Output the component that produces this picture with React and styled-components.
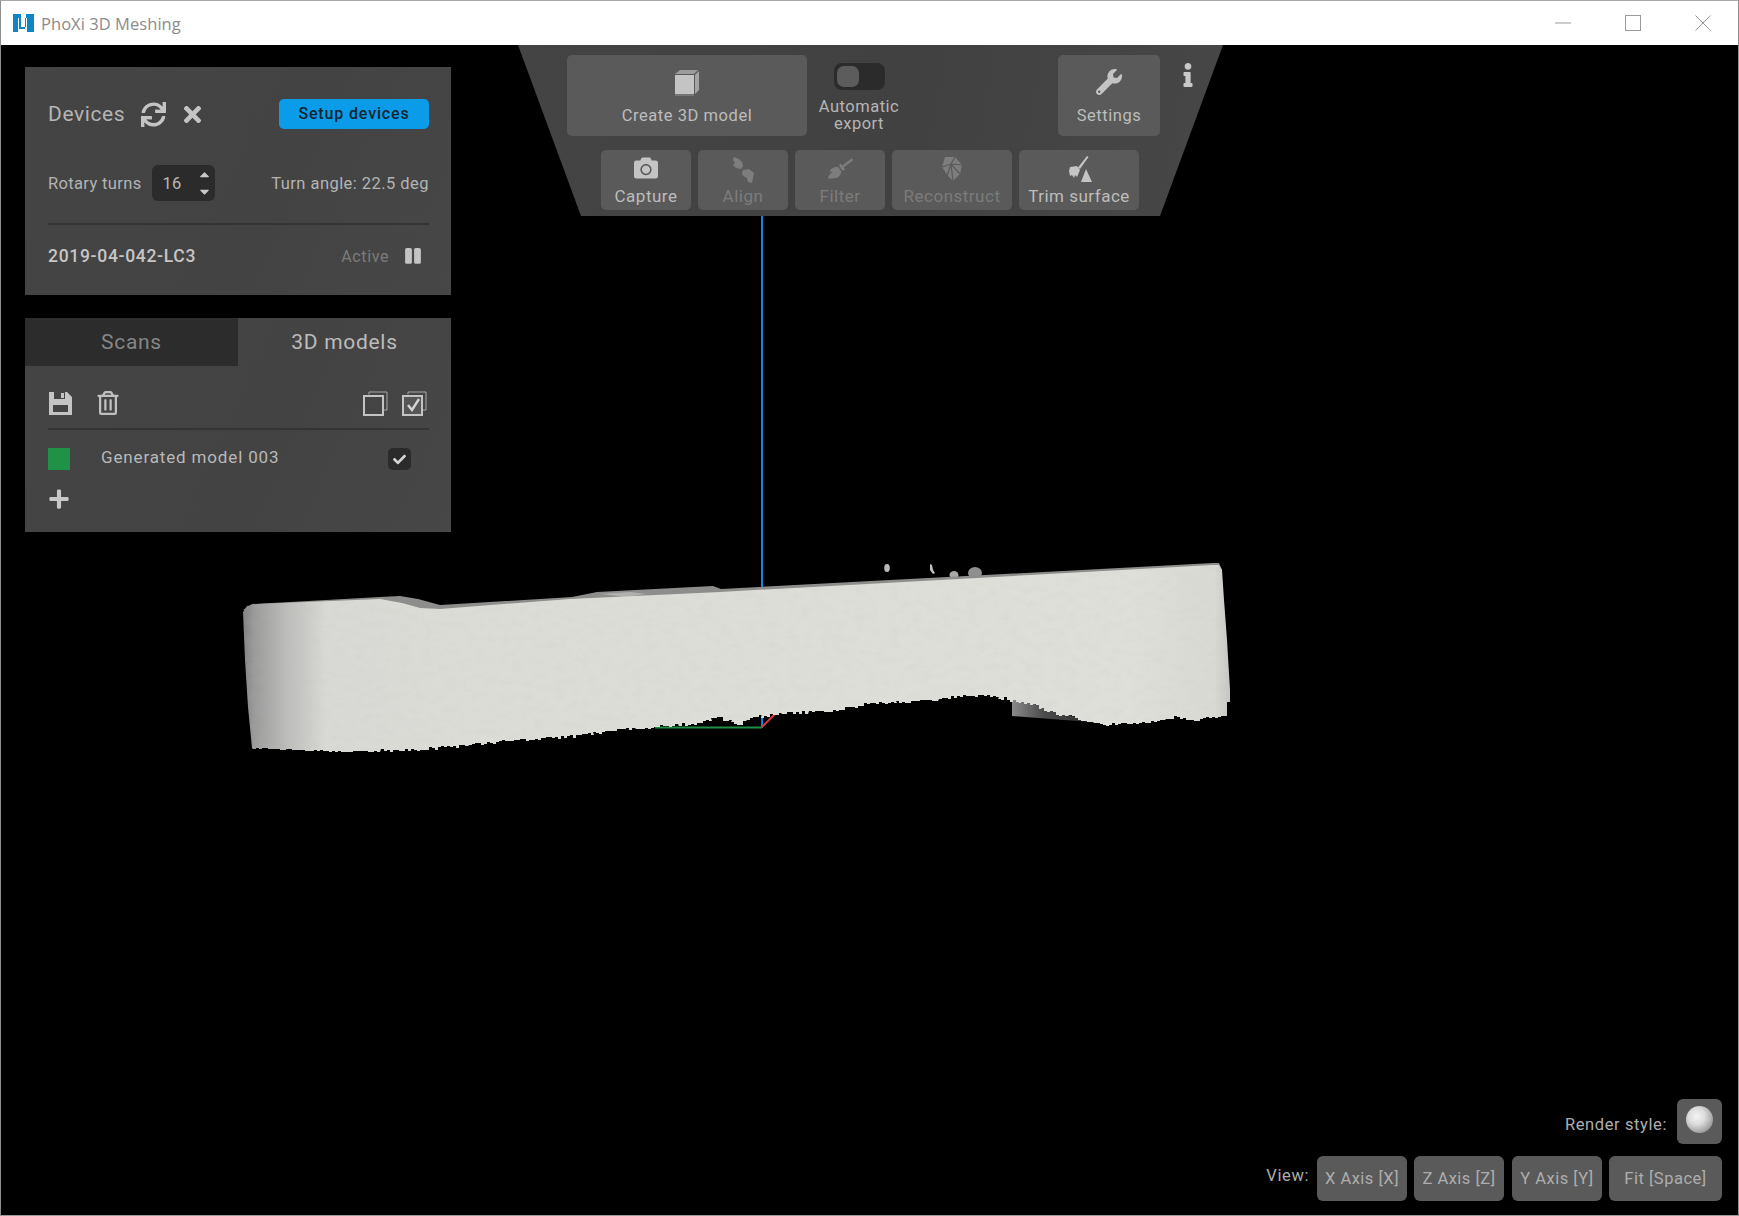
import React from "react";
import styled, { createGlobalStyle } from "styled-components";
import {
  FaSync, FaTimes, FaWrench, FaCamera, FaInfo, FaRegTrashAlt, FaPause, FaPlus, FaBroom, FaCheck, FaCaretUp, FaCaretDown,
} from "react-icons/fa";

const Global = createGlobalStyle`
  html, body { margin: 0; padding: 0; background: #000; }
  body { font-family: Roboto, "Liberation Sans", sans-serif; }
  * { box-sizing: border-box; }
`;

const Window = styled.div`
  width: 1739px; height: 1216px; display: flex; flex-direction: column; overflow: hidden;
  border: 1px solid #8c8c8c; border-bottom-color: #9a9a9a; border-top-color: #a8a8a8; background: #000;
`;
const TitleBar = styled.header`
  height: 44px; flex: none; background: #fff; display: flex; align-items: center; padding-left: 12px;
`;
const AppTitle = styled.span`
  font-family: "Open Sans", sans-serif; font-size: 16.5px; color: #8b8b8b; margin-left: 6px; letter-spacing: 0.05px;
`;
const WinControls = styled.div`
  margin-left: auto; display: flex; height: 100%; align-items: center; color: #8f8f8f;
`;
const WinBtn = styled.div`
  width: 70px; height: 100%; display: flex; align-items: center; justify-content: center;
`;
const Viewport = styled.main`
  flex: 1; position: relative; background: #000; overflow: hidden;
`;
const Scene = styled.svg`
  position: absolute; inset: 0; width: 100%; height: 100%; display: block;
`;
const SideColumn = styled.div`
  position: absolute; left: 24px; top: 22px; width: 426px; display: flex; flex-direction: column; gap: 23px;
`;
const Panel = styled.section`
  background: linear-gradient(115deg, #444 0%, #434343 60%, #474747 100%);
  height: ${p => p.$h}px; color: #bdbdbd;
`;
const DevicesPanel = styled(Panel)`
  padding: 32px 22px 0 23px; display: flex; flex-direction: column;
`;
const HeadRow = styled.div`
  display: flex; align-items: center; height: 30px;
`;
const DevicesTitle = styled.span`
  font-size: 21px; color: #b5b5b5; letter-spacing: 0.6px; width: 93px;
`;
const HeadIcon = styled.span`
  display: flex; color: #c4c4c4; font-size: ${p => p.$size}px; margin-right: ${p => p.$mr || 0}px;
`;
const SetupButton = styled.button`
  margin-left: auto; width: 150px; height: 30px; border: 0; border-radius: 5px; background: #0a9be9; color: #10242e;
  font: 500 16px Roboto, sans-serif; letter-spacing: 0.85px; padding: 0 0 2px;
`;
const RotaryRow = styled.div`
  display: flex; align-items: center; margin-top: 36px; height: 36px; font-size: 16.5px; letter-spacing: 0.35px; color: #b4b4b4;
`;
const SpinBox = styled.div`
  width: 63px; height: 36px; margin-left: 10px; background: #2b2b2b; border-radius: 6px; display: flex; align-items: center;
  padding-left: 11px; color: #b9b9b9; position: relative;
`;
const SpinArrows = styled.span`
  margin-left: auto; margin-right: 3px; display: flex; flex-direction: column; color: #c8c8c8; font-size: 15px; line-height: 0; gap: 2px;
`;
const TurnAngle = styled.span`
  margin-left: auto; letter-spacing: 0.45px;
`;
const Divider = styled.hr`
  border: 0; height: 2px; background: #343434; margin: ${p => p.$m};
`;
const DeviceRow = styled.div`
  display: flex; align-items: center; margin-top: 20px; height: 22px;
`;
const DeviceName = styled.span`
  font-size: 17.5px; font-weight: 500; color: #c6c6c6; letter-spacing: 0.7px;
`;
const ActiveLabel = styled.span`
  margin-left: auto; font-size: 16px; color: #7c7c7c; letter-spacing: 0.6px; margin-right: 15px;
`;
const PauseIcon = styled.span`
  display: flex; color: #c4c4c4; font-size: 18px; margin-right: 7px;
`;
const Tabs = styled.div`
  display: grid; grid-template-columns: 213px 1fr; height: 48px;
`;
const Tab = styled.div`
  display: flex; align-items: center; justify-content: center; font-size: 21px; letter-spacing: 0.7px;
  background: ${p => (p.$active ? "transparent" : "#2c2c2c")}; color: ${p => (p.$active ? "#bcbcbc" : "#868686")};
`;
const TabBody = styled.div`
  padding: 24px 22px 0 23px;
`;
const IconRow = styled.div`
  display: flex; align-items: center; height: 26px; gap: 23px;
`;
const RightIcons = styled.div`
  margin-left: auto; display: flex; gap: 14px; margin-right: 2px;
`;
const ModelRow = styled.div`
  display: flex; align-items: center; height: 22px;
`;
const Swatch = styled.div`
  width: 22px; height: 22px; background: ${p => p.$c};
`;
const ModelName = styled.span`
  margin-left: 31px; margin-top: -5px; font-size: 17px; color: #b9b9b9; letter-spacing: 0.85px;
`;
const CheckBox = styled.div`
  margin-left: auto; margin-right: 18px; width: 23px; height: 22px; border-radius: 5px; background: #2b2b2b; color: #d6d6d6;
  display: flex; align-items: center; justify-content: center; font-size: 13px;
`;
const AddRow = styled.div`
  margin-top: 18px; color: #c8c8c8; font-size: 22px; display: flex;
`;
const Toolbar = styled.nav`
  position: absolute; left: 517px; top: 0; width: 705px; height: 171px; background: linear-gradient(100deg, #444 0%, #414141 55%, #474747 100%);
  clip-path: polygon(0 0, 100% 0, 642px 100%, 63px 100%);
  display: flex; flex-direction: column; padding-top: 10px;
`;
const TopRow = styled.div`
  display: flex; height: 81px; padding-left: 49px;
`;
const ToolButton = styled.button`
  border: 0; border-radius: 5px; background: #5a5a5a; padding: 0; height: 100%; width: ${p => p.$w}px; flex: none;
  display: flex; flex-direction: column; align-items: center; justify-content: space-between;
  font-family: Roboto, sans-serif; color: ${p => (p.$off ? "#7c7c7c" : "#bdbdbd")};
`;
const BigButton = styled(ToolButton)`
  font-size: 16.5px; letter-spacing: 0.55px; padding: 14px 0 11px;
`;
const SmallButton = styled(ToolButton)`
  font-size: 17px; letter-spacing: 0.5px; padding: 6px 0 4px;
`;
const ToggleGroup = styled.div`
  width: 104px; display: flex; flex-direction: column; align-items: center; padding-top: 8px; color: #b5b5b5;
  font-size: 16.5px; line-height: 17px; letter-spacing: 0.5px; text-align: center;
`;
const Toggle = styled.div`
  width: 51px; height: 27px; background: #2b2b2b; border-radius: 8px; padding: 3px; margin-bottom: 8px;
`;
const Knob = styled.div`
  width: 22px; height: 21px; background: #5c5c5c; border-radius: 7px;
`;
const Spacer = styled.div`flex: 1;`;
const InfoSlot = styled.div`
  width: 63px; padding: 8px 0 0 16px; color: #c8c8c8; font-size: 24px; display: flex; align-items: flex-start;
`;
const BottomRow = styled.div`
  display: flex; gap: 7px; height: 60px; margin-top: 14px; padding-left: 83px;
`;
const ViewControls = styled.div`
  position: absolute; right: 16px; bottom: 14px; display: flex; flex-direction: column; align-items: flex-end; gap: 12px;
  font-size: 16.5px; color: #aeaeae; letter-spacing: 0.6px;
`;
const ControlRow = styled.div`
  display: flex; align-items: center;
`;
const RenderLabel = styled.span`
  margin-right: 10px; margin-top: 5px;
`;
const RenderButton = styled.div`
  width: 45px; height: 45px; background: #5a5a5a; border-radius: 6px; display: flex; align-items: center; justify-content: center;
`;
const Sphere = styled.div`
  width: 27px; height: 27px; border-radius: 50%; margin: -4px 0 0 -1px;
  background: radial-gradient(circle at 40% 38%, #f4f4f4 0%, #dcdcdc 35%, #9a9a9a 75%, #6e6e6e 100%);
`;
const ViewLabel = styled.span`
  margin-right: 8px; margin-top: -6px;
`;
const AxisButton = styled.div`
  width: ${p => p.$w}px; height: 45px; margin-left: ${p => p.$ml || 0}px; background: #5a5a5a; border-radius: 6px;
  display: flex; align-items: center; justify-content: center; font-size: 16.5px; color: #aeaeae; letter-spacing: 0.5px;
`;

/* ---------- hand-drawn icons ---------- */
const Logo = () => (
  <svg width="22" height="20" viewBox="0 0 22 20">
    <path fill="#0f86c4" d="M0 1h8v13h5V1h-1 0h9v18h-7V5h-2v11H6V5H5v14H0z" />
    <path fill="#0f86c4" d="M13 1h3v3h-3z" />
  </svg>
);
const SaveIcon = () => (
  <svg width="25" height="25" viewBox="0 0 25 25">
    <path fill="#c4c4c4" fillRule="evenodd" d="M1 1h18l5 5v18H1zM6 1v7h11V1zM5 14v7h15v-7z" />
    <path fill="#c4c4c4" d="M13 2h3v5h-3z" />
  </svg>
);
const CopyIcon = ({ checked }) => (
  <svg width="25" height="25" viewBox="0 0 25 25" fill="none">
    <path stroke="#a8a8a8" strokeWidth="1" d="M6 3.5V1h18v18h-3" />
    <rect x="1" y="5" width="19" height="19" stroke="#c4c4c4" strokeWidth="2" fill={checked ? "#555" : "none"} />
    {checked && <path stroke="#d4d4d4" strokeWidth="2.4" d="M6 14l4 5 7-11" />}
  </svg>
);
const CubeIcon = () => (
  <svg width="26" height="28" viewBox="0 0 26 28">
    <path fill="#c4c4c4" d="M1 6h19v19H1z" />
    <path fill="#a4a4a4" d="M21 6l4-4v19l-4 4z" />
    <path fill="#9c9c9c" d="M1 5l5-4h18l-4 4z" />
    <path fill="#757575" d="M1 25h19v2H1z" />
  </svg>
);
const AlignIcon = () => (
  <svg width="26" height="28" viewBox="0 0 26 28">
    <path fill="#7d7d7d" d="M4 1l5 2 3 3 1 4-2 3-5-1-3-3 2-2-2-3zM13 14l6-1 5 4-1 5-1 5-4-1-1-4-4-2-1-3z" />
  </svg>
);
const ReconstructIcon = () => (
  <svg width="24" height="26" viewBox="0 0 24 26">
    <path fill="#7d7d7d" d="M5 1h10l7 8-2 9-7 7-5-5-6-9z" />
    <path stroke="#5a5a5a" strokeWidth="1.2" fill="none" d="M13 25L11 8l4-7M11 8L2 11M11 8l11 1M11 8l9 10M11 8L7 20" />
  </svg>
);
const TrimIcon = () => (
  <svg width="28" height="28" viewBox="0 0 28 28">
    <path fill="#c4c4c4" d="M22 0l1.5 1L15 13l-2-1.5zM5 11l7-1 3 4-3 7-2-2-1 3-2-3-2 1-1-5zM21 13l6 13H16z" />
  </svg>
);

/* ---------- the scanned part ---------- */
function seeded(seed) {
  let s = seed;
  return () => { s = (s * 16807) % 2147483647; return s / 2147483647; };
}
const bottomAnchors = [
  [1230, 703], [1227, 715], [1200, 720], [1177, 717], [1157, 722], [1103, 725], [1087, 720], [1053, 712], [1030, 703], [1007, 699],
  [990, 695], [960, 697], [920, 702], [873, 703], [830, 712], [793, 713], [773, 715], [753, 718], [743, 725], [720, 718],
  [703, 723], [660, 727], [617, 730], [570, 737], [520, 740], [420, 750], [347, 752], [253, 748],
];
const jagged = (() => {
  const r = seeded(4711);
  const out = [];
  for (let i = 0; i < bottomAnchors.length - 1; i++) {
    const [x0, y0] = bottomAnchors[i];
    const [x1, y1] = bottomAnchors[i + 1];
    const n = Math.max(1, Math.round((x0 - x1) / 3));
    for (let k = 0; k < n; k++) {
      const t = k / n;
      const x = x0 + (x1 - x0) * t;
      const y = Math.round(y0 + (y1 - y0) * t + (r() - 0.5) * (x < 380 ? 1.2 : 3.2));
      out.push(`${x.toFixed(0)},${y}`);
      out.push(`${(x - 3).toFixed(0)},${y}`);
    }
  }
  return out.join(" ");
})();
const frontOutline = `243,612 247,606 258,604 380,599 402,603 420,608 440,609 570,599 720,592 1213,565 1219,565 1222,570 1224,600 1227,640 1230,690 ${jagged} 252,748 248,707 245,660`;

const ScannedPart = () => (
  <Scene viewBox="1 45 1737 1170" aria-hidden="true">
    <defs>
      <linearGradient id="faceShade" gradientUnits="userSpaceOnUse" x1="242" y1="0" x2="1230" y2="0">
        <stop offset="0" stopColor="#7f7f7f" />
        <stop offset="0.012" stopColor="#9a9a9a" />
        <stop offset="0.045" stopColor="#bcbcba" />
        <stop offset="0.085" stopColor="#d8d8d4" />
        <stop offset="0.2" stopColor="#dcdcd7" />
        <stop offset="0.9" stopColor="#dedfd9" />
        <stop offset="0.985" stopColor="#d9d9d4" />
        <stop offset="1" stopColor="#c6c6c2" />
      </linearGradient>
      <linearGradient id="undercut" gradientUnits="userSpaceOnUse" x1="1012" y1="0" x2="1090" y2="0">
        <stop offset="0" stopColor="#8a8a8a" />
        <stop offset="0.4" stopColor="#4c4c4c" />
        <stop offset="1" stopColor="#2c2c2c" />
      </linearGradient>
      <filter id="grain" x="0" y="0" width="100%" height="100%">
        <feTurbulence type="fractalNoise" baseFrequency="0.09 0.14" numOctaves="3" seed="8" />
        <feColorMatrix values="0 0 0 0 0.5  0 0 0 0 0.5  0 0 0 0 0.5  0.9 0 0 0 -0.38" />
        <feComposite in2="SourceAlpha" operator="in" />
      </filter>
    </defs>

    {/* axes, behind the part */}
    <path d="M762 216V728" stroke="#0d86dc" strokeWidth="2" />
    <path d="M655 727.5H762" stroke="#1f8f46" strokeWidth="2" />
    <path d="M762 727l13-13" stroke="#d8343a" strokeWidth="2" />

    {/* specks on the far edge */}
    <ellipse cx="887" cy="568" rx="2.8" ry="4" fill="#b9b9b6" />
    <path d="M930 564l2 1 1 5 2 3-2 1-3-4z" fill="#c2c2bf" />
    <ellipse cx="954" cy="575" rx="4.5" ry="4" fill="#a9a9a6" />
    <ellipse cx="975" cy="573" rx="7" ry="6" fill="#8f8f8d" />

    {/* top face */}
    <path d="M243 610L252 604L380 597L400 596L418 599L440 605L572 597L597 592L713 586L721 589L1213 563L1219 563L1222 570L720 596L440 611L420 610Z" fill="#8d8d8b" />
    <path d="M600 594l30-2 16 2-20 3z" fill="#b0b0ae" />

    {/* dark undercut */}
    <path d="M1012 698L1050 708L1090 722L1012 716Z" fill="url(#undercut)" />

    {/* front face */}
    <polygon points={frontOutline} fill="url(#faceShade)" />
    <polygon points={frontOutline} fill="#fff" filter="url(#grain)" opacity="0.28" />
  </Scene>
);

const tools = [
  { label: "Capture", w: 90, icon: <FaCamera size={24} color="#c4c4c4" /> },
  { label: "Align", w: 90, off: true, icon: <AlignIcon /> },
  { label: "Filter", w: 90, off: true, icon: <FaBroom size={25} color="#7d7d7d" /> },
  { label: "Reconstruct", w: 120, off: true, icon: <ReconstructIcon /> },
  { label: "Trim surface", w: 120, icon: <TrimIcon /> },
];
const axes = [
  { label: "X Axis [X]", w: 90 },
  { label: "Z Axis [Z]", w: 90, ml: 7 },
  { label: "Y Axis [Y]", w: 90, ml: 8 },
  { label: "Fit [Space]", w: 113, ml: 7 },
];

export default function App() {
  return (
    <Window>
      <Global />
      <TitleBar>
        <Logo />
        <AppTitle>PhoXi 3D Meshing</AppTitle>
        <WinControls>
          <WinBtn><svg width="16" height="2"><path d="M0 1h16" stroke="#9a9a9a" /></svg></WinBtn>
          <WinBtn><svg width="16" height="16"><rect x=".5" y=".5" width="15" height="15" fill="none" stroke="#9a9a9a" /></svg></WinBtn>
          <WinBtn><svg width="16" height="16"><path d="M.5.5l15 15M15.500.500l-15 15" stroke="#9a9a9a" /></svg></WinBtn>
        </WinControls>
      </TitleBar>
      <Viewport>
        <ScannedPart />
        <SideColumn>
          <DevicesPanel $h={228}>
            <HeadRow>
              <DevicesTitle>Devices</DevicesTitle>
              <HeadIcon $size={25} $mr={14}><FaSync /></HeadIcon>
              <HeadIcon $size={25}><FaTimes /></HeadIcon>
              <SetupButton>Setup devices</SetupButton>
            </HeadRow>
            <RotaryRow>
              Rotary turns
              <SpinBox>16<SpinArrows><FaCaretUp /><FaCaretDown /></SpinArrows></SpinBox>
              <TurnAngle>Turn angle: 22.5 deg</TurnAngle>
            </RotaryRow>
            <Divider $m="22px 0 0" />
            <DeviceRow>
              <DeviceName>2019-04-042-LC3</DeviceName>
              <ActiveLabel>Active</ActiveLabel>
              <PauseIcon><FaPause /></PauseIcon>
            </DeviceRow>
          </DevicesPanel>
          <Panel $h={214}>
            <Tabs>
              <Tab>Scans</Tab>
              <Tab $active>3D models</Tab>
            </Tabs>
            <TabBody>
              <IconRow>
                <SaveIcon />
                <FaRegTrashAlt size={24} color="#c0c0c0" />
                <RightIcons><CopyIcon /><CopyIcon checked /></RightIcons>
              </IconRow>
              <Divider $m="12px 0 18px" />
              <ModelRow>
                <Swatch $c="#1f9245" />
                <ModelName>Generated model 003</ModelName>
                <CheckBox><FaCheck /></CheckBox>
              </ModelRow>
              <AddRow><FaPlus /></AddRow>
            </TabBody>
          </Panel>
        </SideColumn>
        <Toolbar>
          <TopRow>
            <BigButton $w={240}><CubeIcon />Create 3D model</BigButton>
            <ToggleGroup>
              <Toggle><Knob /></Toggle>
              Automatic<br />export
            </ToggleGroup>
            <Spacer />
            <BigButton $w={102}><FaWrench size={26} color="#c4c4c4" />Settings</BigButton>
            <InfoSlot><FaInfo /></InfoSlot>
          </TopRow>
          <BottomRow>
            {tools.map(t => (
              <SmallButton key={t.label} $w={t.w} $off={t.off}>{t.icon}{t.label}</SmallButton>
            ))}
          </BottomRow>
        </Toolbar>
        <ViewControls>
          <ControlRow>
            <RenderLabel>Render style:</RenderLabel>
            <RenderButton><Sphere /></RenderButton>
          </ControlRow>
          <ControlRow>
            <ViewLabel>View:</ViewLabel>
            {axes.map(a => (
              <AxisButton key={a.label} $w={a.w} $ml={a.ml}>{a.label}</AxisButton>
            ))}
          </ControlRow>
        </ViewControls>
      </Viewport>
    </Window>
  );
}
